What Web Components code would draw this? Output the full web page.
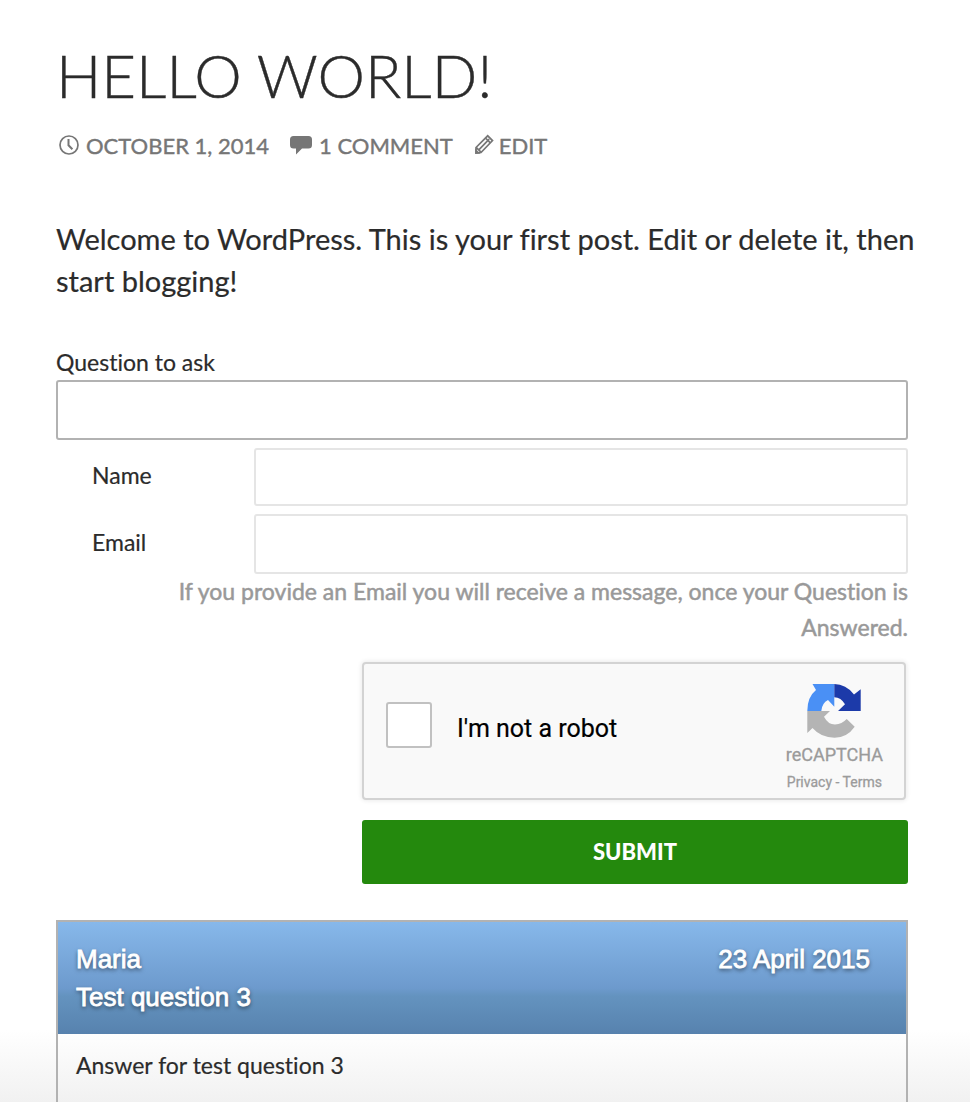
<!DOCTYPE html>
<html lang="en">
<head>
<meta charset="utf-8">
<meta name="viewport" content="width=device-width, initial-scale=1">
<title>Hello world!</title>
<style>
  html { height: 100%; overflow-x: hidden; scrollbar-width: none; }
  body {
    margin: 0;
    min-height: 100%;
    background: #fff linear-gradient(to top, #f1f1f1, #fff 72px) fixed;
    color: #2b2b2b;
    font-family: Lato, sans-serif;
    font-size: 23px;
    line-height: 36px;
    font-variant-ligatures: none;
  }
</style>
</head>
<body>
<blog-post>
  <span slot="title">Hello world!</span>
  <post-meta slot="meta" date="October 1, 2014" comments="1 Comment"></post-meta>
  <p slot="body">Welcome to WordPress. This is your first post. Edit or delete it, then start blogging!</p>
  <question-form>
    <captcha-box></captcha-box>
  </question-form>
  <question-card>
    <span slot="author">Maria</span>
    <span slot="date">23 April 2015</span>
    <span slot="question">Test question 3</span>
    Answer for test question 3
  </question-card>
</blog-post>

<script>
class BaseElement extends HTMLElement {
  constructor() {
    super();
    this.attachShadow({ mode: 'open' }).innerHTML = this.render();
  }
}

customElements.define('blog-post', class extends BaseElement {
  render() {
    return `
      <style>
        :host { display: block; padding: 39px 62px 0 56px; }
        h1 { margin: 0; font-size: 60px; line-height: 72px; font-weight: 300; text-transform: uppercase; -webkit-text-stroke: 0.4px; }
        header { display: grid; gap: 19px; }
        ::slotted(p) { margin: 56px -20px 42px 0; font-size: 29px; line-height: 42px; -webkit-text-stroke: 0.2px; }
      </style>
      <article>
        <header>
          <h1><slot name="title"></slot></h1>
          <slot name="meta"></slot>
        </header>
        <slot name="body"></slot>
        <slot></slot>
      </article>`;
  }
});

customElements.define('post-meta', class extends HTMLElement {
  connectedCallback() {
    if (this.shadowRoot) return;
    this.attachShadow({ mode: 'open' }).innerHTML = `
      <style>
        :host { display: flex; gap: 20px; padding-left: 2px; color: #767676; font-size: 22px; line-height: 32px; text-transform: uppercase; -webkit-text-stroke: 0.4px; }
        a { display: flex; align-items: center; gap: 6px; color: inherit; text-decoration: none; white-space: nowrap; }
        a:hover { color: #24890d; }
        svg { display: block; flex: none; margin-bottom: 2px; }
        .edit { gap: 4px; }
      </style>
      <a href="#date">
        <svg width="22" height="22" viewBox="0 0 22 22" fill="none" stroke="currentColor"><circle cx="11" cy="11" r="9" stroke-width="1.7"/><path d="M10.5 5v6.3l3.9 4" stroke-width="2"/></svg>
        <time datetime="2014-10-01">${this.getAttribute('date')}</time>
      </a>
      <a href="#comments">
        <svg width="24" height="22" viewBox="0 0 24 22" fill="currentColor"><path d="M4.5 2h15a3.5 3.5 0 0 1 3.5 3.5v5.5a3.5 3.5 0 0 1-3.5 3.5H13L7 20.5V14.5H4.5A3.5 3.5 0 0 1 1 11V5.5A3.5 3.5 0 0 1 4.5 2z"/></svg>
        ${this.getAttribute('comments')}
      </a>
      <a class="edit" href="#edit">
        <svg width="22" height="24" viewBox="0 0 22 24" fill="none" stroke="currentColor" stroke-width="1.7"><path d="M3 20V14.5L14.7 2.8l4.8 4.8L8 19.5z M3.4 14.6l4.8 4.8M5.800 16.800L16.200 6.200M12.500 5l4.800 4.800"/><path d="M2.200 15.500v5.200h5.200z" fill="currentColor" stroke="none"/></svg>
        Edit
      </a>`;
  }
});

customElements.define('question-form', class extends BaseElement {
  render() {
    return `
      <style>
        :host { display: block; }
        form { display: grid; }
        label { -webkit-text-stroke: 0.2px; }
        input {
          box-sizing: border-box; width: 100%; height: 60px; margin: 0; padding: 8px 16px;
          border: 2px solid #e5e5e5; border-radius: 3px; background: #fff;
          color: inherit; font: inherit; outline: none;
        }
        input:focus { border-color: #b2b2b2; }
        .question { display: grid; }
        .question input { border-color: #b2b2b2; }
        .fields { display: grid; grid-template-columns: 198px 1fr; row-gap: 8px; margin-top: 8px; }
        .fields label { padding: 0 0 4px 36px; align-self: center; }
        .name { height: 58px; }
        .note { justify-self: end; margin: -1px 0 0; max-width: 760px; color: #999; text-align: right; -webkit-text-stroke: 0.5px #999; }
        .actions { margin: 17px 0 0 306px; display: grid; gap: 20px; }
        button {
          height: 64px; border: 0; border-radius: 3px; background: #24890d; color: #fff;
          font: 900 22px/32px Lato, sans-serif; text-transform: uppercase; cursor: pointer;
        }
        button:hover { background: #41a62a; }
      </style>
      <form>
        <div class="question">
          <label for="question">Question to ask</label>
          <input id="question" type="text">
        </div>
        <div class="fields">
          <label for="name">Name</label>
          <input class="name" id="name" type="text">
          <label for="email">Email</label>
          <input id="email" type="email">
        </div>
        <p class="note">If you provide an Email you will receive a message, once your Question is Answered.</p>
        <div class="actions">
          <slot></slot>
          <button type="submit">Submit</button>
        </div>
      </form>`;
  }
});

customElements.define('captcha-box', class extends BaseElement {
  render() {
    return `
      <style>
        :host {
          box-sizing: border-box; height: 138px; margin-right: 2px; padding: 0 21px 0 22px;
          display: flex; align-items: center; gap: 24px;
          border: 2px solid #d3d3d3; border-radius: 4px; background: #f9f9f9;
          box-shadow: 0 0 4px 1px rgba(0,0,0,.08);
          font-family: Roboto, sans-serif;
        }
        label { flex: 1; display: flex; align-items: center; gap: 25px; color: #000; font-size: 25px; line-height: 32px; margin-bottom: 12px; -webkit-text-stroke: 0.2px; }
        input { appearance: none; flex: none; width: 46px; height: 46px; margin: 0; border: 2px solid #c1c1c1; border-radius: 3px; background: #fff; }
        input:checked { background: #24890d; }
        .text { margin-top: 8px; }
        .brand { display: grid; justify-items: center; padding-top: 14px; color: #9b9b9b; }
        svg { display: block; }
        .logo-text { font-size: 18px; line-height: 32px; -webkit-text-stroke: 0.3px; }
        .links { font-size: 14px; line-height: 22px; white-space: nowrap; -webkit-text-stroke: 0.3px; }
        a { color: inherit; text-decoration: none; }
      </style>
      <label><input type="checkbox"><span class="text">I'm not a robot</span></label>
      <div class="brand">
        <svg width="56" height="56" viewBox="0 0 56 56" aria-hidden="true">
          <path fill="#4a90f5" d="M6.5 1H28.3V23.7L22 17Q16 20 15.3 28H1.3Q1.3 14 10 7z"/>
          <path fill="#1c3aa9" d="M28.3 1Q40 1 48 11.5L54.7 6.3V28H32L39 21.3Q35 14.5 28.3 14.3z"/>
          <path fill="#b4b4b4" d="M1.3 28H24L18 33.7Q22 41.5 29 41.5Q36 41 40.7 36L48.7 43.7Q41 54.7 28.5 54.7Q15 54.7 6.5 45L1.3 50z"/>
        </svg>
        <span class="logo-text">reCAPTCHA</span>
        <span class="links"><a href="#privacy">Privacy</a> - <a href="#terms">Terms</a></span>
      </div>`;
  }
});

customElements.define('question-card', class extends BaseElement {
  render() {
    return `
      <style>
        :host { display: block; margin-top: 36px; border: 2px solid #b2b2b2; }
        header {
          display: grid; grid-template-columns: 1fr auto; padding: 18px 36px 18px 18px;
          background: linear-gradient(#87b8ea, #6d9acd 59%, #6493bf 66%, #5782ae);
          color: #fff; font-family: "Liberation Sans", Arial, sans-serif; font-size: 26px; line-height: 38px;
          text-shadow: 0 2px 4px rgba(0,0,0,.6); -webkit-text-stroke: 0.8px #fff;
        }
        .answer { padding: 13px 18px 28px; -webkit-text-stroke: 0.2px; }
      </style>
      <header>
        <slot name="author"></slot>
        <slot name="date"></slot>
        <slot name="question"></slot>
      </header>
      <div class="answer"><slot></slot></div>`;
  }
});
</script>
</body>
</html>
